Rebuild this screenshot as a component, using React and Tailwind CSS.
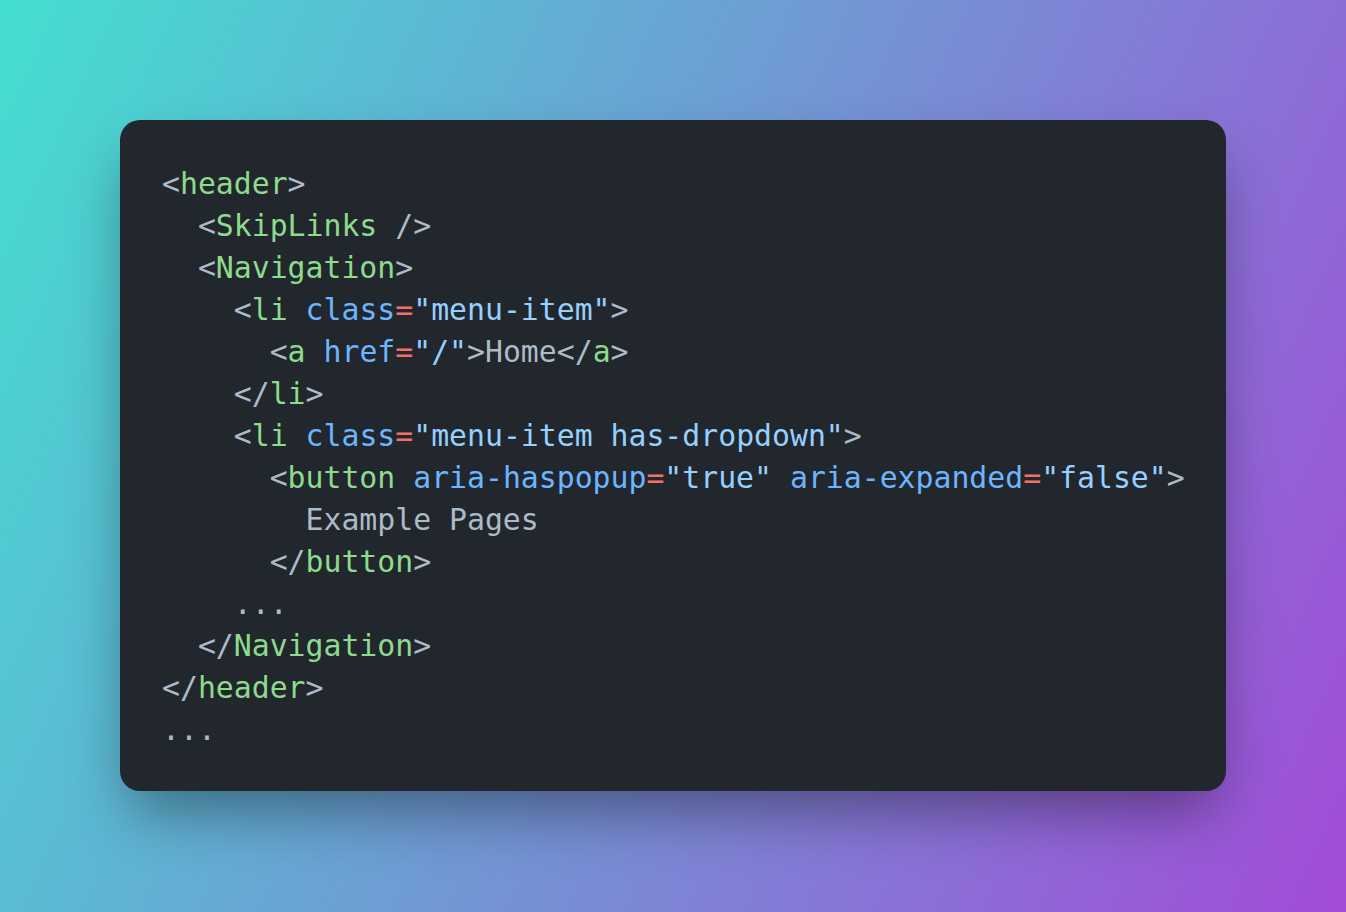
import React from "react";

const P = ({ children }) => <span className="text-[#adbac7]">{children}</span>;
const T = ({ children }) => <span className="text-[#8ddb8c]">{children}</span>;
const A = ({ children }) => <span className="text-[#6cb6ff]">{children}</span>;
const E = () => <span className="text-[#f47067]">=</span>;
const S = ({ children }) => <span className="text-[#96d0ff]">{children}</span>;

const Line = ({ indent = 0, children }) => (
  <div className="h-[42px] leading-[42px] whitespace-pre">
    {" ".repeat(indent)}
    {children}
  </div>
);

export default function App() {
  return (
    <div
      className="w-[1346px] h-[912px] pt-[120px] pl-[120px] overflow-hidden"
      style={{ background: "linear-gradient(114deg, #44dfd1 0%, #a24bd8 100%)" }}
    >
      <div
        className="w-[1106px] h-[671px] rounded-[20px] bg-[#22272e] pt-[43px] pl-[42px] shadow-[0_30px_60px_-10px_rgba(0,0,0,0.4)] text-[29.8px]"
        style={{ fontFamily: '"DejaVu Sans Mono", "Liberation Mono", monospace' }}
      >
        <Line indent={0}>
          <P>&lt;</P><T>header</T><P>&gt;</P>
        </Line>
        <Line indent={2}>
          <P>&lt;</P><T>SkipLinks</T><P> /&gt;</P>
        </Line>
        <Line indent={2}>
          <P>&lt;</P><T>Navigation</T><P>&gt;</P>
        </Line>
        <Line indent={4}>
          <P>&lt;</P><T>li</T> <A>class</A><E /><S>"menu-item"</S><P>&gt;</P>
        </Line>
        <Line indent={6}>
          <P>&lt;</P><T>a</T> <A>href</A><E /><S>"/"</S><P>&gt;Home&lt;/</P><T>a</T><P>&gt;</P>
        </Line>
        <Line indent={4}>
          <P>&lt;/</P><T>li</T><P>&gt;</P>
        </Line>
        <Line indent={4}>
          <P>&lt;</P><T>li</T> <A>class</A><E /><S>"menu-item has-dropdown"</S><P>&gt;</P>
        </Line>
        <Line indent={6}>
          <P>&lt;</P><T>button</T> <A>aria-haspopup</A><E /><S>"true"</S> <A>aria-expanded</A><E /><S>"false"</S><P>&gt;</P>
        </Line>
        <Line indent={8}>
          <P>Example Pages</P>
        </Line>
        <Line indent={6}>
          <P>&lt;/</P><T>button</T><P>&gt;</P>
        </Line>
        <Line indent={4}>
          <P>...</P>
        </Line>
        <Line indent={2}>
          <P>&lt;/</P><T>Navigation</T><P>&gt;</P>
        </Line>
        <Line indent={0}>
          <P>&lt;/</P><T>header</T><P>&gt;</P>
        </Line>
        <Line indent={0}>
          <P>...</P>
        </Line>
      </div>
    </div>
  );
}
